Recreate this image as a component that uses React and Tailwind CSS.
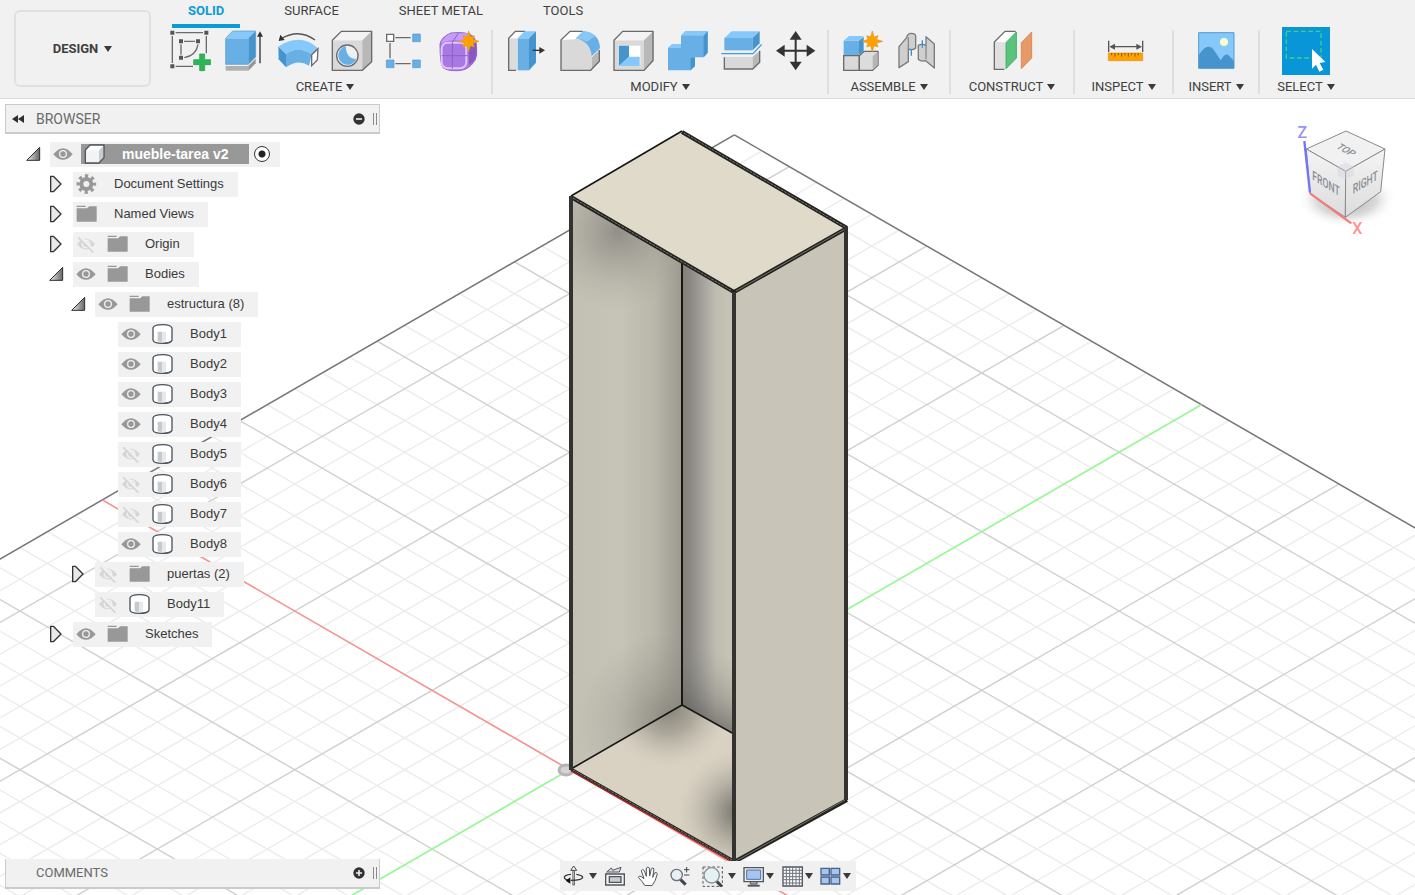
import React, { useState } from 'react'

const BLUE = '#67afe4'
const BLUE_LIGHT = '#86c8fa'
const BLUE_DARK = '#4694cd'
const LINE = '#6b6b6b'

function Caret() {
  return (
    <svg viewBox="0 0 8 6" className="h-1.5 w-2 shrink-0" aria-hidden="true">
      <path d="M0 0h8L4 6z" fill="#3a3a3a" />
    </svg>
  )
}

function Icon({ children }) {
  return (
    <svg viewBox="0 0 126 126" className="h-[42px] w-[42px] shrink-0" fill="none" aria-hidden="true">
      {children}
    </svg>
  )
}

function Star({ x, y }) {
  const points = Array.from({ length: 16 }, (_, i) => {
    const r = i % 2 ? 14 : i % 4 ? 24 : 31
    const t = (i * Math.PI) / 8
    return `${x + r * Math.sin(t)},${y - r * Math.cos(t)}`
  }).join(' ')
  return <polygon points={points} fill="#ffa200" stroke="#e0962a" strokeWidth="2" />
}

function SketchIcon() {
  return (
    <Icon>
      <path d="M20 8h82M10 18v81M112 18v52M20 109h52" stroke={LINE} strokeWidth="4" />
      <path d="M45 34h33M36 43v31M87 43Q82 76 46 83" stroke={LINE} strokeWidth="4" />
      <path
        d="M4 2h12v12H4zM106 2h12v12h-12zM4 103h12v12H4zM30 28h12v12H30zM81 28h12v12H81zM30 77h12v12H30z"
        fill="#555"
      />
      <path d="M92 72h15v17h18v15h-18v18H92v-18H74V89h18z" fill="#2cb457" stroke="#1f9a48" strokeWidth="2" />
    </Icon>
  )
}

function ExtrudeIcon() {
  return (
    <Icon>
      <path d="M8 108h68v14H8z" fill="#b0b0b0" />
      <path d="M76 108l22-22v14l-22 22z" fill="#959595" />
      <path d="M8 25h68v78H8z" fill={BLUE} />
      <path d="M8 25L29 3h69L76 25z" fill={BLUE_LIGHT} />
      <path d="M76 25L98 3v78l-22 22z" fill={BLUE_DARK} />
      <path d="M8 25L29 3h69v78l-22 22H8z" stroke="#5599cc" strokeWidth="2" />
      <path d="M111 100V14" stroke="#333" strokeWidth="4" />
      <path d="M102 20l9-16 9 16z" fill="#333" />
    </Icon>
  )
}

function RevolveIcon() {
  return (
    <Icon>
      <path d="M4 50Q32 29 66 29q34 2 58 27l-20 17Q64 46 27 72z" fill={BLUE_LIGHT} />
      <path d="M27 72q37-26 77 1l-8 34Q64 86 27 112z" fill={BLUE} />
      <path d="M4 50l23 22v40L5 88z" fill={BLUE_DARK} />
      <path d="M104 74l19-18-2 34-17 17z" fill="#fff" stroke={LINE} strokeWidth="4" />
      <path d="M114 30Q66-5 14 25" stroke="#555" strokeWidth="4" />
      <path d="M5 33L10 14l13 16z" fill="#333" />
    </Icon>
  )
}

function HoleIcon() {
  return (
    <Icon>
      <path d="M4 31h90v90H4z" fill="#d9d9d9" />
      <path d="M4 31L31 4h91L94 31z" fill="#f3f3f3" />
      <path d="M94 31l28-27v91l-28 26z" fill="#b8b8b8" />
      <path d="M4 31L31 4h91v91l-28 26H4z" stroke={LINE} strokeWidth="4" />
      <circle cx="49" cy="77" r="32" fill="#f0f0f0" stroke={LINE} strokeWidth="4" />
      <path d="M44 49a28 28 0 1 0 32 38q-30 0-32-38z" fill={BLUE} />
    </Icon>
  )
}

function PatternIcon() {
  return (
    <Icon>
      <path d="M31 23h46M15 39v46M31 101h46" stroke={LINE} strokeWidth="4" />
      <path d="M5 13h21v21H5z" fill="#fff" stroke={LINE} strokeWidth="4" />
      <path d="M83 12h23v23H83zM4 90h23v23H4zM83 90h23v23H83z" fill={BLUE} stroke="#5599cc" strokeWidth="2" />
    </Icon>
  )
}

function FormIcon() {
  return (
    <Icon>
      <path d="M3 42Q8 20 36 9q50-5 66 10 12 10 11 55-2 18-16 31-16 17-42 17-30 1-43-9-9-10-9-71z" fill="#a979e3" stroke="#9166c8" strokeWidth="3" />
      <path d="M5 42Q18 12 42 10h50L72 34Q30 24 5 42z" fill="#c69dfc" />
      <path d="M88 52l24-16v38q-2 17-22 31z" fill="#8758bd" />
      <rect x="8" y="38" width="74" height="77" rx="18" stroke="#dfc3ff" strokeWidth="6" />
      <path d="M40 37v79M8 77h78M40 37l18-27" stroke="#8b62c2" strokeWidth="3" />
      <Star x={89} y={34} />
    </Icon>
  )
}

function PressPullIcon() {
  return (
    <Icon>
      <path d="M14 25L34 4h29L39 26v95H14z" fill="#dcdcdc" />
      <path d="M14 25L34 4h29L40 25z" fill="#fff" />
      <path d="M36 121H14V25L34 4h30" stroke={LINE} strokeWidth="4" />
      <path d="M41 25h34v96H41z" fill={BLUE} />
      <path d="M41 25L62 4h34L75 25z" fill={BLUE_LIGHT} />
      <path d="M75 25L96 4v94l-21 23z" fill={BLUE_DARK} />
      <path d="M86 61h26" stroke="#333" strokeWidth="4" />
      <path d="M106 51l17 10-17 10z" fill="#333" />
    </Icon>
  )
}

function FilletIcon() {
  return (
    <Icon>
      <path d="M9 30L36 4h34L54 26q46 8 48 52v43H9z" fill="#d9d9d9" />
      <path d="M9 30L36 4h34L52 28z" fill="#fff" />
      <path d="M102 82l22-22v34l-22 23z" fill="#b8b8b8" />
      <path d="M74 4H36L9 30v91h89l26-27V60" stroke={LINE} strokeWidth="4" />
      <path d="M54 25L76 4q48 4 50 51l-25 24Q98 36 54 25z" fill={BLUE} />
      <path d="M54 25L76 4q24 2 36 14L86 36Q74 27 54 25z" fill={BLUE_LIGHT} />
    </Icon>
  )
}

function ShellIcon() {
  return (
    <Icon>
      <path d="M6 31h90v90H6z" fill="#d9d9d9" />
      <path d="M6 31L32 4h92L96 31z" fill="#f3f3f3" />
      <path d="M96 31l28-27v88l-28 29z" fill="#b8b8b8" />
      <path d="M6 31L32 4h91v88l-27 29H6z" stroke={LINE} strokeWidth="4" />
      <path d="M21 47h64v61H21z" fill="#fff" />
      <path d="M21 47h30v33l-30 28z" fill={BLUE_DARK} />
      <path d="M21 108l30-28h32v28z" fill={BLUE_LIGHT} />
    </Icon>
  )
}

function CombineIcon() {
  return (
    <Icon>
      <path d="M6 54l13-12h26V17L58 4h67v64l-12 14H87v26l-13 13H6z" fill={BLUE} />
      <path d="M6 54l13-12h26v12zM45 17L58 4h67l-12 13z" fill={BLUE_LIGHT} />
      <path d="M113 17l12-13v64l-12 14zM74 83h13v25l-13 13z" fill={BLUE_DARK} />
    </Icon>
  )
}

function SplitIcon() {
  return (
    <Icon>
      <path d="M13 24h85v37H13z" fill={BLUE} />
      <path d="M13 24L35 4h84L98 24z" fill={BLUE_LIGHT} />
      <path d="M98 24l21-20v36L98 61z" fill={BLUE_DARK} />
      <path d="M4 71h95l26-28" stroke="#3d9ee8" strokeWidth="4" />
      <path d="M13 81h85v36H13z" fill="#d9d9d9" />
      <path d="M98 81l21-19v35l-21 20z" fill="#b8b8b8" />
      <path d="M13 82v35h85l21-20V62" stroke={LINE} strokeWidth="4" />
    </Icon>
  )
}

function MoveIcon() {
  return (
    <Icon>
      <path d="M65 16v92M19 62h92" stroke="#333" strokeWidth="6" />
      <path d="M65 3l18 26H47zM65 121l18-26H47zM6 62l26-18v36zM124 62L98 44v36z" fill="#333" />
    </Icon>
  )
}

function ComponentIcon() {
  return (
    <Icon>
      <path d="M8 77h47v44H8z" fill="#d9d9d9" stroke={LINE} strokeWidth="4" />
      <path d="M55 77l14-13h42v42l-16 15H55z" fill="#dcdcdc" stroke={LINE} strokeWidth="4" strokeLinejoin="round" />
      <path d="M95 79l15-14v41l-15 14z" fill="#b5b5b5" />
      <path d="M8 32h46v43H8z" fill={BLUE} />
      <path d="M8 32l16-14h44L54 32z" fill={BLUE_LIGHT} />
      <path d="M54 32l14-12v42L54 75z" fill={BLUE_DARK} />
      <Star x={94} y={34} />
    </Icon>
  )
}

function JointIcon() {
  return (
    <Icon>
      <path d="M12 50l23-27q2-13 14-13t13 8v36q-8 8-22 3v38l-28 18z" fill="#cfcfcf" stroke="#7b7b7b" strokeWidth="4" strokeLinejoin="round" />
      <path d="M40 22v36" stroke="#8b8b8b" strokeWidth="4" />
      <path d="M118 42L93 20v26q-12-6-23 0v42q8 8 22 4l26 22z" fill="#cfcfcf" stroke="#7b7b7b" strokeWidth="4" strokeLinejoin="round" />
      <path d="M93 46v42" stroke="#8b8b8b" strokeWidth="4" />
      <path d="M49 58v19M82 31v22" stroke="#2196f3" strokeWidth="4" />
    </Icon>
  )
}

function PlaneIcon() {
  return (
    <Icon>
      <path d="M10 36h32v82H10z" fill="#e0e0e0" />
      <path d="M10 36L42 4h33L42 37z" fill="#fff" />
      <path d="M40 118H10V36L42 4h32" stroke={LINE} strokeWidth="4" />
      <path d="M45 38L76 6v78l-31 32z" fill="#59c47c" stroke="#44ab66" strokeWidth="3" />
      <path d="M91 38l31-32v78l-31 32z" fill="#e59a68" stroke="#d98b56" strokeWidth="3" />
    </Icon>
  )
}

function MeasureIcon() {
  return (
    <Icon>
      <path d="M17 32v34M119 32v34M26 50h84" stroke="#555" strokeWidth="4" />
      <path d="M19 50l17-9v18zM117 50l-17-9v18z" fill="#555" />
      <path d="M16 69h103v23H16z" fill="#ffa200" stroke="#e0901a" strokeWidth="2" />
      <path d="M26 69v7M36 69v11M46 69v7M56 69v11M66 69v7M76 69v11M86 69v7M96 69v11M106 69v7" stroke="#8a5a10" strokeWidth="3" />
    </Icon>
  )
}

function ImageIcon() {
  return (
    <Icon>
      <path d="M11 8h106v107H11z" fill={BLUE_LIGHT} />
      <path d="M11 76q28-44 48-12l18 27q16-28 28-11l12 13v22H11z" fill={BLUE_DARK} />
      <circle cx="87" cy="36" r="12" fill="#fffbd0" />
      <path d="M11 8h106v107H11z" stroke="#4f9dd3" strokeWidth="3" />
    </Icon>
  )
}

function SelectIcon() {
  return (
    <svg viewBox="0 0 144 144" className="h-12 w-12 shrink-0" aria-hidden="true">
      <path d="M0 0h144v144H0z" fill="#0896d8" />
      <path d="M13 13h104v80H13z" fill="none" stroke="#3fd08a" strokeWidth="4" strokeDasharray="14 8" />
      <path d="M90 66l40 39-17 3 11 20-12 6-10-21-12 12z" fill="#fff" />
    </svg>
  )
}

const toolGroups = [
  {
    label: 'CREATE',
    width: 'w-[332px]',
    tools: [
      ['Create Sketch', SketchIcon],
      ['Extrude', ExtrudeIcon],
      ['Revolve', RevolveIcon],
      ['Hole', HoleIcon],
      ['Pattern', PatternIcon],
      ['Create Form', FormIcon],
    ],
  },
  {
    label: 'MODIFY',
    width: 'w-[334px]',
    tools: [
      ['Press Pull', PressPullIcon],
      ['Fillet', FilletIcon],
      ['Shell', ShellIcon],
      ['Combine', CombineIcon],
      ['Split Body', SplitIcon],
      ['Move', MoveIcon],
    ],
  },
  {
    label: 'ASSEMBLE',
    width: 'w-[120px]',
    tools: [
      ['New Component', ComponentIcon],
      ['Joint', JointIcon],
    ],
  },
  { label: 'CONSTRUCT', width: 'w-[122px]', tools: [['Offset Plane', PlaneIcon]] },
  { label: 'INSPECT', width: 'w-[97px]', tools: [['Measure', MeasureIcon]] },
  { label: 'INSERT', width: 'w-[84px]', tools: [['Insert Image', ImageIcon]] },
  { label: 'SELECT', width: 'w-[92px]', tools: [['Select', SelectIcon]] },
]

const tabs = ['SOLID', 'SURFACE', 'SHEET METAL', 'TOOLS']

function Toolbar() {
  const [activeTab, setActiveTab] = useState('SOLID')

  return (
    <header className="flex shrink-0 gap-2 overflow-hidden border-b border-[#dcdcdc] bg-[#f1f1f1] pl-3.5 font-['Roboto',sans-serif] text-[13px] text-[#3f3f3f]">
      <button className="mt-2.5 flex h-[77px] w-[137px] shrink-0 items-center justify-center gap-1.5 rounded-md border-2 border-[#e0e0e0] font-bold">
        DESIGN
        <Caret />
      </button>

      <div className="flex flex-col">
        <nav className="flex h-7 gap-7 pl-[13px]">
          {tabs.map((tab) => (
            <button
              key={tab}
              onClick={() => setActiveTab(tab)}
              className={`border-b-4 px-4 pb-0.5 leading-5 whitespace-nowrap ${
                tab === activeTab ? 'border-[#0d9ad9] font-bold text-[#0d9ad9]' : 'border-transparent'
              }`}
            >
              {tab}
            </button>
          ))}
        </nav>

        <div className="flex">
          {toolGroups.map((group, i) => (
            <div key={group.label} className="flex shrink-0">
              <div className={`flex flex-col ${group.width}`}>
                <div className="flex h-[46px] items-center justify-center">
                  {group.tools.map(([name, ToolIcon]) => (
                    <button key={name} aria-label={name} className="flex w-[54px] shrink-0 items-center justify-center">
                      <ToolIcon />
                    </button>
                  ))}
                </div>
                <button className="flex h-6 items-center justify-center gap-1 pt-0.5">
                  {group.label}
                  <Caret />
                </button>
              </div>
              {i < toolGroups.length - 1 && <span className="mt-0.5 h-16 w-0.5 bg-[#dedede]" />}
            </div>
          ))}
        </div>
      </div>
    </header>
  )
}

// Isometric grid: one step along either axis is 27.48 x 15.87, counted from the origin.
const ORIGIN = { x: 569.5, y: 769.7 }
const iso = (a, b) => [ORIGIN.x + 27.48 * (a + b), ORIGIN.y + 15.87 * (a - b)]
const GRID = { aMin: -17, aMax: 50, bMin: -50, bMax: 23 }

function GridLine({ from, to, stroke, width = 1 }) {
  const [x1, y1] = iso(...from)
  const [x2, y2] = iso(...to)
  return <line x1={x1} y1={y1} x2={x2} y2={y2} stroke={stroke} strokeWidth={width} />
}

function Grid() {
  const { aMin, aMax, bMin, bMax } = GRID
  const minor = []
  const major = []
  for (let a = aMin; a <= aMax; a++) {
    const list = a % 5 === 0 ? major : minor
    list.push([[a, bMin], [a, bMax]])
  }
  for (let b = bMin; b <= bMax; b++) {
    const list = b % 5 === 0 ? major : minor
    list.push([[aMin, b], [aMax, b]])
  }
  return (
    <g>
      {minor.map(([from, to], i) => (
        <GridLine key={i} from={from} to={to} stroke="#ececec" width={1.4} />
      ))}
      {major.map(([from, to], i) => (
        <GridLine key={i} from={from} to={to} stroke="#cfcfcf" width={1.4} />
      ))}
      <GridLine from={[aMin, bMin]} to={[aMin, bMax]} stroke="#777" width={1.5} />
      <GridLine from={[aMin, bMax]} to={[aMax, bMax]} stroke="#777" width={1.5} />
      <GridLine from={[aMin, 0]} to={[aMax, 0]} stroke="#ff9090" width={1.5} />
      <GridLine from={[0, bMin]} to={[0, bMax]} stroke="#90ff90" width={1.5} />
    </g>
  )
}

function Cabinet() {
  const left = '571,197 682,262 682,705 571,769'
  const back = '682,262 734,292 734,734 682,705'
  const floor = '571,769 682,705 734,734 734,861'
  return (
    <g>
      <defs>
        <linearGradient id="leftWall">
          <stop offset="0" stopColor="#c2c0b3" />
          <stop offset="0.45" stopColor="#c6c3b7" />
          <stop offset="0.75" stopColor="#b9b7aa" />
          <stop offset="1" stopColor="#9c9a8f" />
        </linearGradient>
        <linearGradient id="backWall">
          <stop offset="0" stopColor="#827f7b" />
          <stop offset="0.15" stopColor="#8b8884" />
          <stop offset="0.45" stopColor="#a9a7a1" />
          <stop offset="0.65" stopColor="#bfbdb0" />
          <stop offset="1" stopColor="#c8c5b8" />
        </linearGradient>
        <linearGradient id="backWallFoot" gradientUnits="userSpaceOnUse" x1="700" y1="716" x2="725" y2="655">
          <stop offset="0" stopColor="#5b5955" stopOpacity="0.6" />
          <stop offset="0.4" stopColor="#6b6964" stopOpacity="0.3" />
          <stop offset="1" stopColor="#8b8984" stopOpacity="0" />
        </linearGradient>
        <radialGradient id="topShade" gradientUnits="userSpaceOnUse" cx="618" cy="232" r="78">
          <stop offset="0" stopColor="#7f7d77" stopOpacity="0.75" />
          <stop offset="0.4" stopColor="#8e8c84" stopOpacity="0.45" />
          <stop offset="1" stopColor="#a9a79a" stopOpacity="0" />
        </radialGradient>
        <radialGradient id="leftWallFoot" gradientUnits="userSpaceOnUse" cx="668" cy="722" r="90">
          <stop offset="0" stopColor="#6d6b64" stopOpacity="0.55" />
          <stop offset="0.5" stopColor="#7d7b73" stopOpacity="0.25" />
          <stop offset="1" stopColor="#8d8b82" stopOpacity="0" />
        </radialGradient>
        <radialGradient id="floorCorner" gradientUnits="userSpaceOnUse" cx="668" cy="706" r="62">
          <stop offset="0" stopColor="#7c796f" stopOpacity="0.95" />
          <stop offset="0.45" stopColor="#8f8b80" stopOpacity="0.6" />
          <stop offset="1" stopColor="#c2bbad" stopOpacity="0" />
        </radialGradient>
        <radialGradient id="floorShade" gradientUnits="userSpaceOnUse" cx="740" cy="812" r="62">
          <stop offset="0" stopColor="#67655f" stopOpacity="0.95" />
          <stop offset="0.4" stopColor="#88857c" stopOpacity="0.6" />
          <stop offset="1" stopColor="#b9b3a6" stopOpacity="0" />
        </radialGradient>
      </defs>

      <ellipse cx="566" cy="770" rx="7" ry="5" fill="#d4d4d4" stroke="#b5b5b5" strokeWidth="3" />

      <polygon points={left} fill="url(#leftWall)" />
      <polygon points={left} fill="url(#topShade)" />
      <polygon points={left} fill="url(#leftWallFoot)" />
      <polygon points={back} fill="url(#backWall)" />
      <polygon points={back} fill="url(#backWallFoot)" />
      <polygon points={floor} fill="#d9d2c3" />
      <polygon points={floor} fill="url(#floorCorner)" />
      <polygon points={floor} fill="url(#floorShade)" />
      <polygon points="734,292 847,227 847,800 734,861" fill="#c8c4b8" />
      <polygon points="571,196 682,131 847,227 734,292" fill="#dfdaca" />

      <g fill="none" stroke="#171715" strokeLinejoin="round">
        <path d="M571 769L682 705L734 734" strokeWidth="1.6" />
        <path d="M682 263V705" strokeWidth="2" />
        <path d="M571 196L682 131" strokeWidth="1.6" />
      </g>
      <g fill="none" stroke="#22221f" strokeWidth="4">
        <path d="M682 132L847 228" />
        <path d="M571 197L734 292" />
        <path d="M734 292L847 228" />
        <path d="M571 769L734 861" strokeWidth="3" />
        <path d="M734 862L847 800" />
      </g>
      <g fill="none" stroke="#77756c" strokeWidth="1">
        <path d="M684 133L845 227" strokeDasharray="3 1" />
        <path d="M573 198L732 291" strokeDasharray="3 1" />
        <path d="M736 291L845 229" />
        <path d="M573 770L732 860" strokeDasharray="3 1" />
        <path d="M736 861L845 800" />
      </g>
      <g stroke="#33322e" strokeWidth="4">
        <path d="M571 196V770M734 292V862M846 227V800" />
      </g>
      <path d="M571 771L732 862" stroke="#9c2424" strokeWidth="1.4" />
    </g>
  )
}

function ViewCube() {
  return (
    <svg
      viewBox="0 0 405 405"
      className="absolute top-[11px] right-0 h-[135px] w-[135px]"
      fontFamily="Roboto, sans-serif"
      role="img"
      aria-label="View cube"
    >
      <defs>
        <radialGradient id="cubeShadow">
          <stop offset="0" stopColor="#777" stopOpacity="0.7" />
          <stop offset="0.6" stopColor="#999" stopOpacity="0.35" />
          <stop offset="1" stopColor="#fff" stopOpacity="0" />
        </radialGradient>
        <linearGradient id="cubeSide" x1="0" y1="0" x2="0" y2="1">
          <stop offset="0" stopColor="#f4f4f4" />
          <stop offset="1" stopColor="#dcdcde" />
        </linearGradient>
      </defs>
      <ellipse cx="200" cy="268" rx="150" ry="85" fill="url(#cubeShadow)" />
      <g stroke="#8a8a8a" strokeWidth="3" strokeLinejoin="round">
        <path d="M79 117L198 63L315 117L197 184z" fill="#f1f1f1" />
        <path d="M79 117L197 184L196 322L90 250z" fill="url(#cubeSide)" />
        <path d="M315 117L197 184L196 322L302 245z" fill="url(#cubeSide)" />
      </g>
      <path d="M172 170l25-13 24 13v26l-24 12-25-12z" fill="#cdd3dc" opacity="0.4" />
      <path d="M73 93L90 248" stroke="#7474f5" strokeWidth="7" />
      <path d="M90 250L214 340" stroke="#f47c7c" strokeWidth="7" />
      <g fill="#888d94" fontSize="36" fontWeight="500" textAnchor="middle">
        <text transform="matrix(0.7 0.4 -0.7 0.5 190 126)">TOP</text>
        <text transform="matrix(0.72 0.45 0 1.1 138 234)">FRONT</text>
        <text transform="matrix(0.72 -0.42 0 1.1 256 230)">RIGHT</text>
      </g>
      <g fontSize="48" fontWeight="500" textAnchor="middle">
        <text x="67" y="84" fill="#9595f7">Z</text>
        <text x="232" y="372" fill="#fb9292">X</text>
      </g>
    </svg>
  )
}

function PanelBar({ title, children, className }) {
  return (
    <div
      className={`flex h-[30px] w-[375px] items-center border-x border-b-2 border-[#cbcbcb] bg-[#f1f1f1] pl-1.5 font-['Roboto',sans-serif] text-[#6a6a6a] ${className}`}
    >
      <span className="w-6">
        {title === 'BROWSER' && (
          <svg viewBox="0 0 12 8" className="h-2 w-3" fill="#2f2f2f" aria-hidden="true">
            <path d="M6 0v8L0 4zM12 0v8L6 4z" />
          </svg>
        )}
      </span>
      <h2 className="flex-1">{title}</h2>
      <button aria-label={`Toggle ${title.toLowerCase()}`} className="mr-2">
        <svg viewBox="0 0 12 12" className="h-3 w-3" aria-hidden="true">
          <circle cx="6" cy="6" r="5.7" fill="#333" />
          <path d={children} stroke="#f1f1f1" strokeWidth="1.6" />
        </svg>
      </button>
      <span className="mr-0.5 h-3 w-1 border-x border-[#8a8a8a]" />
    </div>
  )
}

function EyeIcon({ hidden }) {
  if (hidden) {
    return (
      <svg viewBox="0 0 60 60" className="h-5 w-5 shrink-0" fill="none" aria-hidden="true">
        <path d="M3 31Q30-2 57 31Q30 62 3 31z" fill="#d6d6d6" />
        <circle cx="30" cy="30" r="11" stroke="#f1f1f1" strokeWidth="5" />
        <path d="M11 6l45 46" stroke="#f1f1f1" strokeWidth="8" />
        <path d="M7 10l45 46" stroke="#d6d6d6" strokeWidth="5" />
      </svg>
    )
  }
  return (
    <svg viewBox="0 0 60 60" className="h-5 w-5 shrink-0" fill="none" aria-hidden="true">
      <path d="M1 31Q30-6 59 31Q30 64 1 31z" fill="#989898" />
      <circle cx="30" cy="30" r="10" stroke="#f1f1f1" strokeWidth="4" />
    </svg>
  )
}

function CubeIcon() {
  return (
    <svg viewBox="0 0 63 60" className="h-5 w-[21px] shrink-0" aria-hidden="true">
      <path d="M4 18L18 3h42v38L45 57H4z" fill="#fff" />
      <path d="M45 19L59 5v36L45 56z" fill="#c9ccd1" />
      <path d="M5 19h40v37H5z" fill="#f2f3f5" />
      <path d="M4 18L18 3h42v38L45 57H4z" fill="none" stroke="#50565e" strokeWidth="4" strokeLinejoin="round" />
    </svg>
  )
}

function GearIcon() {
  return (
    <svg viewBox="0 0 63 60" className="h-5 w-[21px] shrink-0" fill="none" aria-hidden="true">
      <circle cx="31" cy="30" r="15" stroke="#989898" strokeWidth="12" />
      <circle cx="31" cy="30" r="24" stroke="#989898" strokeWidth="11" strokeDasharray="9.4 9.45" strokeDashoffset="4.7" />
    </svg>
  )
}

function FolderIcon() {
  return (
    <svg viewBox="0 0 63 60" className="h-5 w-[21px] shrink-0" fill="#989898" aria-hidden="true">
      <path d="M2 5h27v4H2zM2 13h31l7-6h22v46H2z" />
    </svg>
  )
}

function BodyIcon() {
  return (
    <svg viewBox="0 0 63 60" className="h-5 w-[21px] shrink-0" aria-hidden="true">
      <path d="M3 12Q5 2 31 2t29 10v36q-2 10-29 10T3 48z" fill="#fff" stroke="#4d545d" strokeWidth="4" />
      <path d="M17 23h14v31q-9 0-14-2z" fill="#c6cace" />
      <path d="M31 23h11v30l-11 1z" fill="#e6e8ea" />
    </svg>
  )
}

const nodeIcons = { gear: GearIcon, folder: FolderIcon, body: BodyIcon }

const indents = ['pl-[26px]', 'pl-[49px]', 'pl-[71px]', 'pl-[94px]']

const tree = [
  { name: 'Document Settings', level: 1, icon: 'gear', arrow: 'closed' },
  { name: 'Named Views', level: 1, icon: 'folder', arrow: 'closed' },
  { name: 'Origin', level: 1, icon: 'folder', arrow: 'closed', eye: 'off' },
  { name: 'Bodies', level: 1, icon: 'folder', arrow: 'open', eye: 'on' },
  { name: 'estructura (8)', level: 2, icon: 'folder', arrow: 'open', eye: 'on' },
  { name: 'Body1', level: 3, icon: 'body', eye: 'on' },
  { name: 'Body2', level: 3, icon: 'body', eye: 'on' },
  { name: 'Body3', level: 3, icon: 'body', eye: 'on' },
  { name: 'Body4', level: 3, icon: 'body', eye: 'on' },
  { name: 'Body5', level: 3, icon: 'body', eye: 'off' },
  { name: 'Body6', level: 3, icon: 'body', eye: 'off' },
  { name: 'Body7', level: 3, icon: 'body', eye: 'off' },
  { name: 'Body8', level: 3, icon: 'body', eye: 'on' },
  { name: 'puertas (2)', level: 2, icon: 'folder', arrow: 'closed', eye: 'off' },
  { name: 'Body11', level: 2, icon: 'body', eye: 'off' },
  { name: 'Sketches', level: 1, icon: 'folder', arrow: 'closed', eye: 'on' },
]

function Arrow({ state, name }) {
  if (!state) return <span className="w-6 shrink-0" />
  return (
    <button aria-label={`Toggle ${name}`} className="w-6 shrink-0">
      <svg viewBox="0 0 72 54" className="h-[18px] w-6" aria-hidden="true">
        {state === 'open' ? (
          <path d="M2 46L41 7v39z" fill="url(#arrowFill)" stroke="#2e2e2e" strokeWidth="3" />
        ) : (
          <path d="M5 4h8l23 23-23 23H5z" fill="#e9e9e9" stroke="#333" strokeWidth="4" strokeLinejoin="round" />
        )}
      </svg>
    </button>
  )
}

function TreeRow({ node }) {
  const NodeIcon = nodeIcons[node.icon]
  return (
    <li className={`flex h-[30px] items-center ${indents[node.level]}`}>
      <Arrow state={node.arrow} name={node.name} />
      <div className="flex h-[25px] items-center bg-[#f1f1f1] pr-3.5 pl-[3px]">
        {node.eye && (
          <button aria-label={`Show or hide ${node.name}`} className="mr-[11px]">
            <EyeIcon hidden={node.eye === 'off'} />
          </button>
        )}
        <NodeIcon />
        <span className="ml-[17px] whitespace-nowrap">{node.name}</span>
      </div>
    </li>
  )
}

function Browser() {
  return (
    <section>
      <PanelBar title="BROWSER" className="ml-[5px] border-t text-sm">
        M3 6h6
      </PanelBar>
      <svg className="absolute h-0 w-0" aria-hidden="true">
        <linearGradient id="arrowFill">
          <stop offset="0" stopColor="#eee" />
          <stop offset="1" stopColor="#666" />
        </linearGradient>
      </svg>
      <ul className="mt-[5px] text-[13px] text-[#3a3a3a]">
        <li className={`flex h-[30px] items-center ${indents[0]}`}>
          <Arrow state="open" name="mueble-tarea v2" />
          <div className="flex h-[25px] items-center bg-[#f1f1f1] pr-2.5 pl-[3px]">
            <button aria-label="Show or hide mueble-tarea v2" className="mr-2">
              <EyeIcon />
            </button>
            <div className="flex h-5 w-[168px] items-center bg-[#989898] pl-[3px] text-sm font-bold text-white">
              <CubeIcon />
              <span className="ml-[17px] whitespace-nowrap">mueble-tarea v2</span>
            </div>
            <input
              type="radio"
              name="activeComponent"
              defaultChecked
              aria-label="Activate component"
              className="ml-[5px] h-4 w-4 appearance-none rounded-full border border-[#333] bg-[radial-gradient(circle,#222_0_3px,#fff_4px)]"
            />
          </div>
        </li>
        {tree.map((node) => (
          <TreeRow key={node.name} node={node} />
        ))}
      </ul>
    </section>
  )
}

function NavIcon({ label, className, children }) {
  return (
    <button aria-label={label} className={className}>
      <svg viewBox="0 0 63 63" className="h-[21px] w-[21px] shrink-0" fill="none" aria-hidden="true">
        {children}
      </svg>
    </button>
  )
}

function NavCaret({ label, className }) {
  return (
    <button aria-label={label} className={className}>
      <Caret />
    </button>
  )
}

function NavBar() {
  return (
    <div className="absolute bottom-1 left-1/2 flex h-[30px] w-[296px] -translate-x-1/2 items-center bg-[#f0f0f0] pl-[3px]">
      <NavIcon label="Orbit">
        <path d="M32 8v50" stroke="#444" strokeWidth="7" />
        <path d="M32 10v46" stroke="#fff" strokeWidth="2" />
        <path d="M32 0l9 13H23z" fill="#fff" stroke="#444" strokeWidth="3" />
        <path d="M24 25q-20 2-20 9t14 9M40 25q19 3 19 9 0 9-36 9" stroke="#333" strokeWidth="4" />
        <path d="M8 44l14-10v19z" fill="#111" />
      </NavIcon>
      <NavCaret label="Orbit options" className="ml-[5px]" />
      <NavIcon label="Look at" className="ml-[7px]">
        <path d="M5 24h56v33H5z" fill="#f4f4f4" stroke="#50565e" strokeWidth="4" />
        <path d="M16 32h35v17H16z" fill="#c9cdd2" stroke="#50565e" strokeWidth="4" />
        <path d="M8 18L22 6l4 7 25-9-5 14z" fill="#dfe1e4" stroke="#50565e" strokeWidth="3" />
      </NavIcon>
      <NavIcon label="Pan" className="ml-3">
        <path
          d="M23 58Q16 46 4 34q2-7 9-2l8 6-8-24q4-7 9 0l6 17V6q5-6 9 0l1 24 5-22q6-5 8 1l-4 25 7-14q6-2 7 3-5 24-16 36z"
          fill="#fff"
          stroke="#50565e"
          strokeWidth="3"
          strokeLinejoin="round"
        />
      </NavIcon>
      <NavIcon label="Zoom" className="ml-[11px]">
        <path d="M34 40l16 16" stroke="#40464d" strokeWidth="9" />
        <circle cx="23" cy="27" r="17" fill="#e5f1f2" stroke="#6c737b" strokeWidth="4" />
        <path d="M53 3v16M45 11h16M45 27h16" stroke="#444" strokeWidth="3" />
      </NavIcon>
      <NavIcon label="Fit" className="ml-3">
        <path d="M3 3h58v58H3z" stroke="#555" strokeWidth="3" strokeDasharray="8 6" />
        <path d="M42 44l17 17" stroke="#40464d" strokeWidth="9" />
        <circle cx="29" cy="28" r="23" fill="#e5f1f2" stroke="#8a9198" strokeWidth="4" />
      </NavIcon>
      <NavCaret label="Fit options" className="ml-[5px]" />
      <NavIcon label="Display settings" className="ml-[7px]">
        <path d="M22 45h20v9H22z" fill="#bbb" stroke="#50565e" strokeWidth="3" />
        <path d="M14 59h36" stroke="#50565e" strokeWidth="6" />
        <path d="M3 5h58v42H3z" fill="#eee" stroke="#50565e" strokeWidth="4" />
        <path d="M11 12h42v28H11z" fill="#a5c4ee" stroke="#4d71a8" strokeWidth="3" />
      </NavIcon>
      <NavCaret label="Display options" className="ml-0.5" />
      <NavIcon label="Grid and snaps" className="ml-2">
        <path d="M3 3h58v57H3z" fill="#fff" stroke="#50565e" strokeWidth="4" />
        <path d="M13 3v57M23 3v57M32 3v57M42 3v57M52 3v57M3 13h58M3 22h58M3 32h58M3 41h58M3 51h58" stroke="#6c737b" strokeWidth="3" />
      </NavIcon>
      <NavCaret label="Grid options" className="ml-0.5" />
      <NavIcon label="Viewports" className="ml-[7px]">
        <path d="M3 7h25v20H3zM33 7h26v20H33zM3 33h25v21H3zM33 33h26v21H33z" fill="#a5c4ee" stroke="#4a6288" strokeWidth="4" />
      </NavIcon>
      <NavCaret label="Viewport options" className="ml-0.5" />
    </div>
  )
}

function App() {
  return (
    <div className="flex h-screen flex-col overflow-hidden bg-white font-['Liberation_Sans',Arial,sans-serif]">
      <Toolbar />
      <main className="relative min-h-0 flex-1">
        <svg
          viewBox="0 99 1415 796"
          preserveAspectRatio="xMidYMid slice"
          className="absolute inset-0 h-full w-full"
          role="img"
          aria-label="Model viewport"
        >
          <Grid />
          <Cabinet />
        </svg>
        <div className="relative flex h-full flex-col justify-between pt-[5px] pb-1.5">
          <Browser />
          <PanelBar title="COMMENTS" className="ml-[5px] text-[13px]">
            M3 6h6M6 3v6
          </PanelBar>
        </div>
        <ViewCube />
        <NavBar />
      </main>
    </div>
  )
}

export default App
